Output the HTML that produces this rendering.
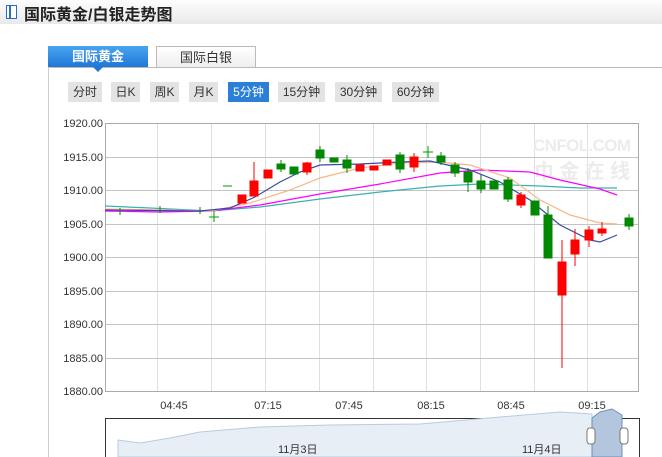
<!DOCTYPE html>
<html><head><meta charset="utf-8"><style>
body{margin:0;width:662px;height:457px;overflow:hidden;background:#fff;font-family:"Liberation Sans","Noto Sans CJK SC",sans-serif;position:relative}
.hd{position:absolute;left:0;top:0;width:662px;height:24px;background:linear-gradient(#fdfdfd,#e9e9e9);}
.hd .t{position:absolute;left:24px;top:1px;font-size:16px;font-weight:bold;color:#222}
.ic{position:absolute;left:6px;top:5px;width:9px;height:12px;border:1px solid #2a6cc4;background:#fff}
.ic:before{content:"";position:absolute;left:2px;top:0;width:2px;height:12px;background:#2a6cc4}
.tab{position:absolute;top:46px;height:21px;font-size:13px;text-align:center;line-height:21px}
.t1{left:48px;width:100px;background:linear-gradient(#4aa3ef,#1f78d8);color:#fff;font-weight:bold}
.t2{left:156px;width:98px;height:20px;border:1px solid #bbb;border-bottom:none;background:linear-gradient(#fff,#eee);color:#333}
.line{position:absolute;left:48px;top:67px;width:614px;height:1px;background:#bbb}
.lv{position:absolute;left:48px;top:67px;width:1px;height:390px;background:#ccc}
.arr{position:absolute;left:93px;top:67px;width:0;height:0;border-left:5px solid transparent;border-right:5px solid transparent;border-top:5px solid #1f78d8}
.b{position:absolute;top:82px;height:20px;line-height:20px;font-size:12px;background:#e3e3e3;color:#333;text-align:center}
.b.on{background:#2b7fd6;color:#fff}
</style></head><body>
<div class="hd"><div class="ic"></div><div class="t">国际黄金/白银走势图</div></div>
<div class="tab t1">国际黄金</div><div class="tab t2">国际白银</div>
<div class="line"></div><div class="lv"></div><div class="arr"></div>
<div class="b" style="left:68px;width:34px">分时</div>
<div class="b" style="left:111px;width:29px">日K</div>
<div class="b" style="left:150px;width:29px">周K</div>
<div class="b" style="left:189px;width:29px">月K</div>
<div class="b on" style="left:228px;width:41px">5分钟</div>
<div class="b" style="left:278px;width:47px">15分钟</div>
<div class="b" style="left:335px;width:47px">30分钟</div>
<div class="b" style="left:392px;width:47px">60分钟</div>
<svg width="662" height="457" style="position:absolute;left:0;top:0" font-family="Liberation Sans, sans-serif">
<g stroke="#e0e0e0" stroke-width="1">
<line x1="157.5" y1="123" x2="157.5" y2="391"/><line x1="211.5" y1="123" x2="211.5" y2="391"/><line x1="265.5" y1="123" x2="265.5" y2="391"/><line x1="319.5" y1="123" x2="319.5" y2="391"/><line x1="373.5" y1="123" x2="373.5" y2="391"/><line x1="426.5" y1="123" x2="426.5" y2="391"/><line x1="480.5" y1="123" x2="480.5" y2="391"/><line x1="534.5" y1="123" x2="534.5" y2="391"/><line x1="587.5" y1="123" x2="587.5" y2="391"/>
</g>
<g stroke="#c4c4c4"><line x1="105" y1="157.5" x2="638" y2="157.5"/><line x1="105" y1="190.5" x2="638" y2="190.5"/><line x1="105" y1="224.5" x2="638" y2="224.5"/><line x1="105" y1="257.5" x2="638" y2="257.5"/><line x1="105" y1="291.5" x2="638" y2="291.5"/><line x1="105" y1="324.5" x2="638" y2="324.5"/><line x1="105" y1="358.5" x2="638" y2="358.5"/></g>
<rect x="105.5" y="123.5" width="533" height="268" fill="none" stroke="#aaa"/>
<g font-size="11" fill="#333" text-anchor="end">
<text x="103" y="127">1920.00</text><text x="103" y="161">1915.00</text><text x="103" y="194">1910.00</text><text x="103" y="228">1905.00</text><text x="103" y="261">1900.00</text><text x="103" y="295">1895.00</text><text x="103" y="328">1890.00</text><text x="103" y="362">1885.00</text><text x="103" y="395">1880.00</text>
</g>
<g font-size="11" fill="#333" text-anchor="middle"><text x="174" y="409">04:45</text><text x="268" y="409">07:15</text><text x="349" y="409">07:45</text><text x="431" y="409">08:15</text><text x="511" y="409">08:45</text><text x="592" y="409">09:15</text></g>
<g fill="#ececec" font-weight="bold"><text x="533" y="151" font-size="17" textLength="98">CNFOL.COM</text><text x="534" y="178" font-size="20" font-family="Noto Sans CJK SC" textLength="96">巾金在线</text></g>
<polyline fill="none" stroke="#3cb0b0" stroke-width="1.2" points="105,206 150,208 211,211 260,207 320,199 380,192 440,186 480,184 540,186 580,188 617,188"/>
<polyline fill="none" stroke="#f0f" stroke-width="1.2" points="105,211 160,212 211,211 260,205 320,194 380,184 440,173 480,170 530,172 560,180 600,189 617,195"/>
<polyline fill="none" stroke="#f5b888" stroke-width="1.2" points="105,209 160,210 211,211 250,203 290,190 320,178 360,168 400,163 440,162 470,165 510,178 540,200 570,215 600,223 617,224"/>
<polyline fill="none" stroke="#3a49a8" stroke-width="1.2" points="105,210 200,211 230,208 255,197 280,182 300,172 320,165 360,164 400,162 430,161 470,170 500,182 530,200 560,225 590,240 600,242 617,235"/>
<g stroke="#090" stroke-width="1"><line x1="214" y1="211" x2="214" y2="222"/><line x1="209" y1="217" x2="219" y2="217"/><line x1="428" y1="146" x2="428" y2="158"/><line x1="423" y1="152" x2="433" y2="152"/><line x1="223" y1="186" x2="232" y2="186"/></g>
<g fill="#f00" stroke="#f00">
<rect x="238" y="195" width="8" height="8"/><line x1="254" y1="162" x2="254" y2="196"/><rect x="250" y="181" width="8" height="15"/><rect x="264" y="170" width="8" height="8"/>
<line x1="307" y1="162" x2="307" y2="175"/><rect x="303" y="163" width="8" height="9"/><rect x="356" y="165" width="8" height="6"/><rect x="370" y="166" width="8" height="4"/><rect x="383" y="160" width="8" height="5"/><line x1="414" y1="153" x2="414" y2="172"/><rect x="410" y="157" width="8" height="10"/>
<line x1="521" y1="192" x2="521" y2="208"/><rect x="517" y="195" width="8" height="10"/>
<line x1="562" y1="240" x2="562" y2="368"/><rect x="558" y="262" width="8" height="33"/>
<line x1="575" y1="229" x2="575" y2="266"/><rect x="571" y="240" width="8" height="14"/>
<line x1="589" y1="226" x2="589" y2="247"/><rect x="585" y="230" width="8" height="10"/>
<line x1="602" y1="222" x2="602" y2="236"/><rect x="598" y="229" width="8" height="4"/>
</g>
<g fill="#080" stroke="#080">
<line x1="281" y1="160" x2="281" y2="172"/><rect x="277" y="164" width="8" height="5"/><rect x="290" y="167" width="8" height="7"/>
<line x1="320" y1="146" x2="320" y2="162"/><rect x="316" y="150" width="8" height="8"/><rect x="330" y="158" width="8" height="4"/><line x1="347" y1="155" x2="347" y2="173"/><rect x="343" y="160" width="8" height="8"/>
<line x1="400" y1="152" x2="400" y2="173"/><rect x="396" y="155" width="8" height="14"/><line x1="441" y1="152" x2="441" y2="165"/><rect x="437" y="156" width="8" height="6"/>
<line x1="455" y1="162" x2="455" y2="177"/><rect x="451" y="165" width="8" height="8"/><line x1="468" y1="168" x2="468" y2="192"/><rect x="464" y="172" width="8" height="10"/>
<line x1="481" y1="175" x2="481" y2="193"/><rect x="477" y="181" width="8" height="8"/><rect x="490" y="181" width="8" height="8"/><line x1="508" y1="177" x2="508" y2="202"/><rect x="504" y="180" width="8" height="19"/>
<rect x="531" y="201" width="8" height="14"/><line x1="548" y1="206" x2="548" y2="258"/><rect x="544" y="215" width="8" height="43"/>
<line x1="629" y1="214" x2="629" y2="230"/><rect x="625" y="218" width="8" height="8"/>
<g stroke-width="1"><line x1="120" y1="208" x2="120" y2="215"/><line x1="160" y1="206" x2="160" y2="213"/><line x1="200" y1="207" x2="200" y2="214"/></g>
</g>
<rect x="105.5" y="418.5" width="534" height="40" fill="none" stroke="#333"/>
<path d="M118,440 L140,443 170,438 200,432 260,427 330,425 420,424 500,417 560,412 592,414 L592,457 118,457Z" fill="#e8eef5" stroke="#b9cbe0"/>
<path d="M592,418 L600,412 612,409 622,415 L622,457 592,457Z" fill="#b3c6dd" stroke="#6d8fba"/>
<rect x="587" y="428" width="8" height="16" rx="3" fill="#fff" stroke="#777"/><rect x="620" y="428" width="8" height="16" rx="3" fill="#fff" stroke="#777"/>
<g font-size="11" fill="#333"><text x="278" y="453">11月3日</text><text x="522" y="453">11月4日</text></g>
</svg>
</body></html>
